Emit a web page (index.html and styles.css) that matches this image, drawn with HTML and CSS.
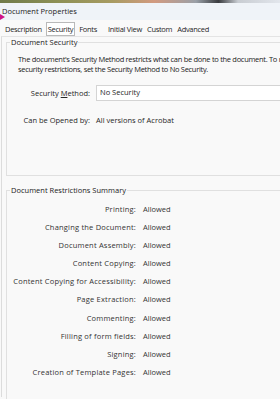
FILE: index.html
```html
<!DOCTYPE html>
<html lang="en">
<head>
    <meta charset="UTF-8">
    <title>Document Properties</title>
    <link rel="stylesheet" href="styles.css">
</head>
<body>

<div class="window">
    <div class="desktop-strip"></div>
    <div class="titlebar">Document Properties</div>
    <div class="cursor"></div>

    <div class="tabs">
        <span class="tab">Description</span>
        <span class="tab active">Security</span>
        <span class="tab">Fonts</span>
        <span class="tab wide-gap">Initial View</span>
        <span class="tab">Custom</span>
        <span class="tab">Advanced</span>
    </div>

    <div class="tab-page">
        <fieldset class="group security-group">
            <legend>Document Security</legend>
            <p class="intro">The document's Security Method restricts what can be done to the document. To remove<br>security restrictions, set the Security Method to No Security.</p>

            <div class="field-row">
                <span class="field-label">Security <u>M</u>ethod:</span>
                <div class="select-box">No Security</div>
            </div>

            <div class="field-row opened-row">
                <span class="field-label">Can be Opened by:</span>
                <span class="field-value">All versions of Acrobat</span>
            </div>
        </fieldset>

        <fieldset class="group summary-group">
            <legend>Document Restrictions Summary</legend>
            <div class="summary">
                <span class="sum-label">Printing:</span><span class="sum-value">Allowed</span>
                <span class="sum-label">Changing the Document:</span><span class="sum-value">Allowed</span>
                <span class="sum-label">Document Assembly:</span><span class="sum-value">Allowed</span>
                <span class="sum-label">Content Copying:</span><span class="sum-value">Allowed</span>
                <span class="sum-label">Content Copying for Accessibility:</span><span class="sum-value">Allowed</span>
                <span class="sum-label">Page Extraction:</span><span class="sum-value">Allowed</span>
                <span class="sum-label">Commenting:</span><span class="sum-value">Allowed</span>
                <span class="sum-label">Filling of form fields:</span><span class="sum-value">Allowed</span>
                <span class="sum-label">Signing:</span><span class="sum-value">Allowed</span>
                <span class="sum-label">Creation of Template Pages:</span><span class="sum-value">Allowed</span>
            </div>
        </fieldset>
    </div>
</div>

</body>
</html>
```

FILE: styles.css
```css
body, html {
    margin: 0;
    padding: 0;
    font-family: 'Open Sans', 'Noto Sans', sans-serif;
    font-size: 7.5px;
    color: #262626;
    background: #f3f3f3;
}

.window {
    position: relative;
    width: 280px;
    height: 399px;
    overflow: hidden;
    background: #f9f9f9;
}

.desktop-strip {
    height: 3px;
    background: linear-gradient(90deg, #6f7a4a 0%, #8c8f55 20%, #a79b62 40%, #d29a80 55%, #9aa0a8 70%, #3a3c40 78%, #c8ccd2 85%, #e2e6ec 100%);
}

.titlebar {
    height: 17px;
    line-height: 17px;
    padding-left: 2px;
    background: #eff3f8;
    color: #222;
}

.cursor {
    position: absolute;
    left: 0;
    top: 14px;
    width: 0;
    height: 0;
    border-left: 5px solid #d0128a;
    border-top: 3px solid transparent;
    border-bottom: 3px solid transparent;
}

.tabs {
    display: flex;
    gap: 1px;
    padding: 2px 0 0 3px;
    height: 14px;
    letter-spacing: -0.3px;
}

.tab {
    padding: 0 1px;
    line-height: 12px;
    border: 1px solid transparent;
}

.tab.active {
    border-color: #b9b9b9;
    background: #fff;
    margin: 0 1px;
}

.tab.wide-gap {
    margin-left: 6px;
}

.tab-page {
    margin-left: 1px;
    border-left: 1px solid #dcdcdc;
    border-top: 1px solid #e4e4e4;
    padding: 0 0 0 4px;
    height: 360px;
}

.group {
    margin: 0;
    padding: 0;
    border: 1px solid #e0e0e0;
    border-right: none;
}

.group legend {
    padding: 0 1px;
    margin-left: 3px;
    line-height: 10px;
    color: #222;
}

.security-group {
    height: 137px;
}

.intro {
    margin: 7px 0 0 11px;
    line-height: 10px;
    white-space: nowrap;
    letter-spacing: -0.3px;
    color: #222;
}

.field-row {
    display: flex;
    align-items: center;
    margin-top: 11px;
}

.field-label {
    width: 83px;
    text-align: right;
    padding-right: 6px;
}

.field-label u {
    text-decoration: underline;
}

.select-box {
    flex-grow: 1;
    height: 14px;
    line-height: 13px;
    padding-left: 3px;
    background: #fff;
    border: 1px solid #d4d4d4;
    border-right: none;
}

.opened-row {
    margin-top: 14px;
}

.summary-group {
    margin-top: 9px;
    height: 220px;
}

.summary {
    display: grid;
    grid-template-columns: 129px auto;
    column-gap: 7px;
    padding-top: 5px;
    color: #333;
}

.sum-label {
    text-align: right;
    line-height: 18.1px;
    letter-spacing: 0.2px;
}

.sum-value {
    line-height: 18.1px;
}
```
